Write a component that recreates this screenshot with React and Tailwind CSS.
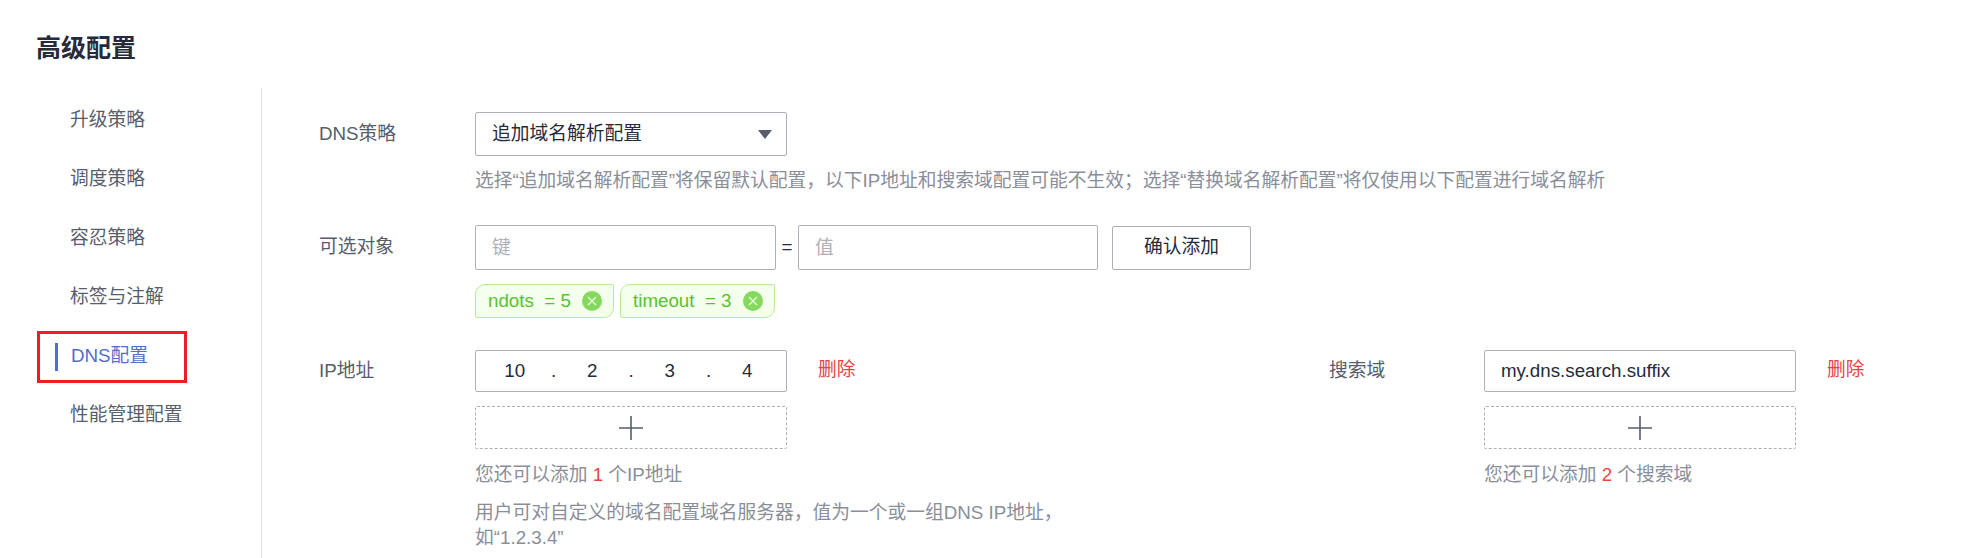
const FONT = "font-['Liberation_Sans','Noto_Sans_CJK_SC',sans-serif]";

const MENU_ITEMS = ['升级策略', '调度策略', '容忍策略', '标签与注解', 'DNS配置', '性能管理配置'];

const TAGS = [
  { id: 'ndots', text: 'ndots', value: '5', width: 'w-[139px]' },
  { id: 'timeout', text: 'timeout', value: '3', width: 'w-[155px]' },
];

function PlusBox() {
  return (
    <button className="w-[312px] h-[43px] mt-[14px] flex items-center justify-center border border-dashed border-[#adb0b8] rounded-[2px]">
      <svg width="26" height="26" viewBox="0 0 26 26" fill="none" stroke="#575d6c" strokeWidth="1.6">
        <path d="M13 1v24M1 13h24" />
      </svg>
    </button>
  );
}

function CloseDot() {
  return (
    <svg width="20" height="20" viewBox="0 0 20 20" className="shrink-0">
      <circle cx="10" cy="10" r="10" fill="#85d95e" />
      <path d="M6 6l8 8M14 6l-8 8" stroke="#eaffdd" strokeWidth="1.2" fill="none" />
    </svg>
  );
}

function Tag({ tag }) {
  return (
    <div className={`${tag.width} h-[34px] flex items-center justify-between pl-[12px] pr-[11px] bg-[#f4ffec] border border-[#b9ec96] rounded-tl-[10px] rounded-br-[10px] rounded-tr-[2px] rounded-bl-[2px] text-[#5ac12e]`}>
      <span className="whitespace-pre">{tag.text}  = {tag.value}</span>
      <CloseDot />
    </div>
  );
}

export default function App() {
  return (
    <div className={`${FONT} h-[558px] w-[1971px] overflow-hidden bg-white text-[18.75px] text-[#575d6c]`}>
      <h2 className="pl-[36px] pt-[32px] h-[88px] text-[25px] leading-[32px] font-bold text-[#252b3a]">高级配置</h2>

      <div className="flex h-[470px]">
        <aside className="w-[262px] shrink-0 border-r border-[#dfe1e6] pl-[37px] pt-[3px]">
          {MENU_ITEMS.map((item) => {
            const active = item === 'DNS配置';
            return (
              <div
                key={item}
                className={active ? 'w-[150px] h-[59px] flex items-center' : 'h-[59px] flex items-center pl-[33px]'}
              >
                {active ? (
                  <div className="w-[150px] h-[52px] border-[3px] border-[#ee1c25] flex items-center pl-[15px] gap-[13px] text-[#526ecc]">
                    <span className="w-[3px] h-[28px] bg-[#526ecc]" />
                    <span>{item}</span>
                  </div>
                ) : (
                  item
                )}
              </div>
            );
          })}
        </aside>

        <main className="flex-1 pl-[57px] pt-[24px]">
          <div className="flex">
            <div className="w-[156px] h-[44px] flex items-center">DNS策略</div>
            <div>
              <div className="w-[312px] h-[44px] flex items-center justify-between pl-[16px] pr-[14px] border border-[#adb0b8] rounded-[2px] text-[#252b3a]">
                <span>追加域名解析配置</span>
                <svg width="14" height="9" viewBox="0 0 14 9"><path d="M0 0h14L7 9z" fill="#575d6c" /></svg>
              </div>
              <p className="mt-[12px] leading-[26px] text-[#8a8e99]">选择“追加域名解析配置”将保留默认配置，以下IP地址和搜索域配置可能不生效；选择“替换域名解析配置”将仅使用以下配置进行域名解析</p>
            </div>
          </div>

          <div className="flex mt-[31px]">
            <div className="w-[156px] h-[44px] flex items-center">可选对象</div>
            <div>
              <div className="flex items-center">
                <input placeholder="键" className="w-[301px] h-[45px] px-[16px] border border-[#adb0b8] rounded-[2px] outline-none placeholder:text-[#adb0b8]" />
                <span className="w-[22px] text-center text-[#252b3a]">=</span>
                <input placeholder="值" className="w-[300px] h-[45px] px-[16px] border border-[#adb0b8] rounded-[2px] outline-none placeholder:text-[#adb0b8]" />
                <button className="ml-[14px] w-[139px] h-[44px] border border-[#adb0b8] rounded-[2px] text-[#252b3a]">确认添加</button>
              </div>
              <div className="flex gap-[6px] mt-[14px]">
                {TAGS.map((tag) => (
                  <Tag key={tag.id} tag={tag} />
                ))}
              </div>
            </div>
          </div>

          <div className="flex mt-[32px]">
            <div className="w-[1010px] shrink-0 flex">
              <div className="w-[156px] h-[42px] flex items-center">IP地址</div>
              <div>
                <div className="flex items-start">
                  <div className="w-[312px] h-[42px] flex items-center border border-[#adb0b8] rounded-[2px] text-[#252b3a]">
                    {['10', '2', '3', '4'].map((octet, i) => (
                      <div key={octet} className="contents">
                        {i > 0 && <span className="w-0 flex justify-center">.</span>}
                        <span className="flex-1 text-center">{octet}</span>
                      </div>
                    ))}
                  </div>
                  <button className="ml-[31px] h-[40px] text-[#e54545]">删除</button>
                </div>
                <PlusBox />
                <p className="mt-[13px] leading-[26px] text-[#8a8e99]">您还可以添加 <span className="text-[#e54545]">1</span> 个IP地址</p>
                <p className="mt-[12px] w-[590px] leading-[25px] text-[#8a8e99]">用户可对自定义的域名配置域名服务器，值为一个或一组DNS IP地址，如“1.2.3.4”</p>
              </div>
            </div>
            <div className="flex">
              <div className="w-[155px] h-[42px] flex items-center">搜索域</div>
              <div>
                <div className="flex items-start">
                  <div className="w-[312px] h-[42px] flex items-center pl-[16px] border border-[#adb0b8] rounded-[2px] text-[#252b3a]">my.dns.search.suffix</div>
                  <button className="ml-[31px] h-[40px] text-[#e54545]">删除</button>
                </div>
                <PlusBox />
                <p className="mt-[13px] leading-[26px] text-[#8a8e99]">您还可以添加 <span className="text-[#e54545]">2</span> 个搜索域</p>
              </div>
            </div>
          </div>
        </main>
      </div>
    </div>
  );
}
